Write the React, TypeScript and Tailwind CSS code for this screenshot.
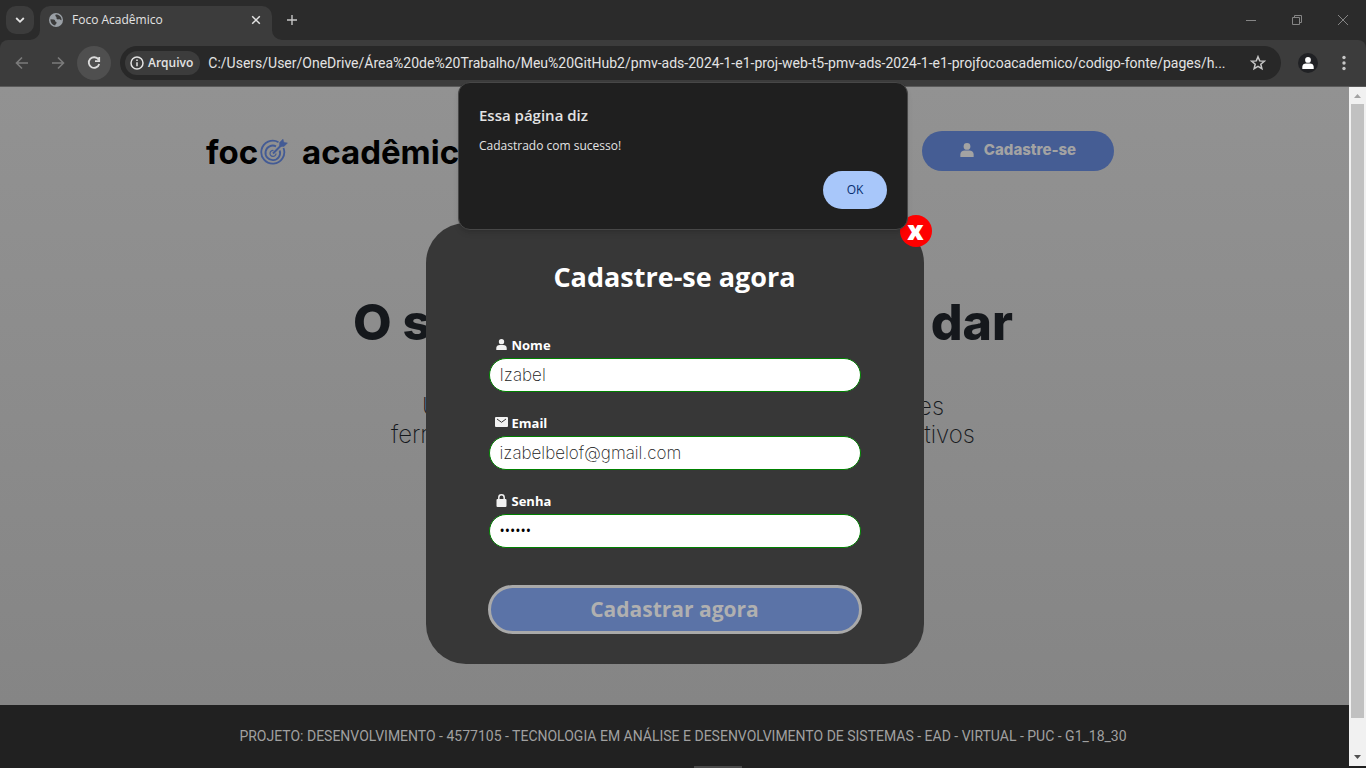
import type { ReactNode } from "react";

const TAB_ICON = "h-4 w-4";

function Globe() {
  return (
    <svg viewBox="0 0 24 24" className="h-[14px] w-[14px] shrink-0" aria-hidden="true">
      <circle cx="12" cy="12" r="12" fill="#9aa0a6" />
      <path
        d="M2.500 10.500 8 11c2 .2 2.500 1 2.500 2.500 0 1.300 2.500 1 2.500 3 0 1.800-2 2-2.500 5A10 10 0 0 1 2.500 10.500zM11.500 2.500c-1.500 2 0 3 1 4.500 1 1.400-.5 3 1.500 3.800 2.200.8 3.500-1 5 .4 1 .9 1.500 1.300 2.500 1.300C22 7 17.500 2.300 11.500 2.500z"
        fill="#3c3c3c"
      />
    </svg>
  );
}

function Target() {
  return (
    <svg viewBox="0 0 28 28" className="ml-[2px] h-7 w-7" fill="none" stroke="#435b95" aria-hidden="true">
      <path d="M18.500 4.200A11.500 11.500 0 1 0 23.500 10" strokeWidth="1.800" />
      <path d="M16 8.300A7.300 7.300 0 1 0 19.700 12.500" strokeWidth="1.900" />
      <path d="M13.500 12.500a3 3 0 1 0 2.500 3" strokeWidth="1.200" />
      <path d="M13 15.500 22.500 6" strokeWidth="2" />
      <path d="M19.500 7.800V4.500L23 1l.8 3.300 3.700.6L24 8.500h-3z" fill="#435b95" strokeWidth=".4" />
    </svg>
  );
}

function Person({ className }: { className: string }) {
  return (
    <svg viewBox="0 0 12 12" className={className} fill="currentColor" aria-hidden="true">
      <circle cx="6" cy="2.900" r="2.900" />
      <path d="M.3 12V9.800C.3 7.700 2 6.500 4 6.500h4c2 0 3.700 1.200 3.700 3.300V12z" />
    </svg>
  );
}

function Mail() {
  return (
    <svg viewBox="0 0 13 10" className="h-[10px] w-[13px]" aria-hidden="true">
      <rect width="13" height="10" rx="1" fill="#f2f2f2" />
      <path d="m2 2 4.500 3.300L11 2" fill="none" stroke="#373737" strokeWidth="1" />
    </svg>
  );
}

function Lock() {
  return (
    <svg viewBox="0 0 11 13" className="h-[13px] w-[11px]" aria-hidden="true">
      <rect x=".5" y="5" width="10" height="8" rx="1" fill="#f2f2f2" />
      <path d="M2.800 6V3.500a2.700 2.700 0 0 1 5.400 0V6" fill="none" stroke="#f2f2f2" strokeWidth="1.500" />
    </svg>
  );
}

function Flare({ className }: { className: string }) {
  return (
    <svg viewBox="0 0 10 10" className={className} aria-hidden="true">
      <path d="M10 0v10H0A10 10 0 0 0 10 0z" fill="#3c3c3c" />
    </svg>
  );
}

function TabStrip() {
  return (
    <div className="flex h-10 items-start bg-[#2b2b2b] pl-[6px] text-[#e3e3e3]">
      <button aria-label="Pesquisar guias" className="mt-[6px] grid h-7 w-7 place-items-center rounded-[10px] bg-[#3c3c3c]">
        <svg viewBox="0 0 10 10" className="h-[10px] w-[10px]" fill="none" stroke="currentColor" strokeWidth="1.800" aria-hidden="true">
          <path d="m1.200 3 3.800 3.800L8.800 3" />
        </svg>
      </button>
      <div className="relative ml-[6px] mt-[6px] flex h-[34px] w-[232px] items-center rounded-t-[10px] bg-[#3c3c3c] pb-[6px] pl-[9px] pr-[11px]">
        <Flare className="absolute -left-[10px] bottom-0 h-[10px] w-[10px]" />
        <Flare className="absolute -right-[10px] bottom-0 h-[10px] w-[10px] -scale-x-100" />
        <Globe />
        <span className="ml-[9px] flex-1 text-[12px]">Foco Acadêmico</span>
        <button aria-label="Fechar guia">
          <svg viewBox="0 0 10 10" className="h-[10px] w-[10px]" stroke="currentColor" strokeWidth="1.500" aria-hidden="true">
            <path d="m1.200 1.200 7.600 7.600M8.800 1.200 1.200 8.800" />
          </svg>
        </button>
      </div>
      <button aria-label="Nova guia" className="ml-3 mt-3 grid h-4 w-4 place-items-center text-[#c7c7c7]">
        <svg viewBox="0 0 10 10" className="h-[10px] w-[10px]" stroke="currentColor" strokeWidth="1.400" aria-hidden="true">
          <path d="M5 0v10M0 5h10" />
        </svg>
      </button>
      <div className="ml-auto flex h-10 items-center text-[#858585]">
        <button aria-label="Minimizar" className="grid h-10 w-[46px] place-items-center">
          <svg viewBox="0 0 10 10" className="h-[10px] w-[10px]" stroke="currentColor" aria-hidden="true">
            <path d="M0 5.500h10" />
          </svg>
        </button>
        <button aria-label="Restaurar" className="grid h-10 w-[46px] place-items-center">
          <svg viewBox="0 0 10 10" className="h-[10px] w-[10px]" fill="none" stroke="currentColor" aria-hidden="true">
            <path d="M.5 2.500h7v7h-7zM2.500 2.500v-2h7v7h-2" />
          </svg>
        </button>
        <button aria-label="Fechar" className="grid h-10 w-[46px] place-items-center">
          <svg viewBox="0 0 10 10" className="h-[10px] w-[10px]" stroke="currentColor" aria-hidden="true">
            <path d="m0 0 10 10M10 0 0 10" />
          </svg>
        </button>
      </div>
    </div>
  );
}

function Toolbar() {
  return (
    <div className="bg-[#2b2b2b]">
      <div className="flex h-[47px] items-center rounded-t-[8px] border-b border-[#5a5a5a] bg-[#3c3c3c] pl-[14px] pr-[14px] text-[#c7c7c7]">
        <button aria-label="Voltar" className="text-[#7b7b7b]">
          <svg viewBox="0 0 16 16" className={TAB_ICON} fill="none" stroke="currentColor" strokeWidth="1.600" aria-hidden="true">
            <path d="M14 8H3M8 2.500 2.500 8 8 13.500" />
          </svg>
        </button>
        <button aria-label="Avançar" className="ml-5 text-[#7b7b7b]">
          <svg viewBox="0 0 16 16" className={TAB_ICON} fill="none" stroke="currentColor" strokeWidth="1.600" aria-hidden="true">
            <path d="M2 8h11M8 2.500 13.500 8 8 13.500" />
          </svg>
        </button>
        <button aria-label="Recarregar" className="ml-[11px] grid h-[34px] w-[34px] place-items-center rounded-full bg-[#4f4f4f] text-[#dcdcdc]">
          <svg viewBox="0 0 16 16" className={TAB_ICON} fill="none" stroke="currentColor" strokeWidth="1.800" aria-hidden="true">
            <path d="M12.500 4.600A5.300 5.300 0 1 0 13.200 9M13.200 2v4.200H9" />
          </svg>
        </button>
        <div className="ml-[9px] flex h-[34px] min-w-0 flex-1 items-center rounded-full bg-[#282828] pl-[5px] pr-[15px]">
          <button className="flex h-6 shrink-0 items-center gap-1 rounded-full bg-[#3c3c3c] pl-[5px] pr-[7px] text-[12px] font-semibold text-[#e3e3e3]">
            <svg viewBox="0 0 14 14" className="h-[14px] w-[14px]" fill="none" stroke="currentColor" strokeWidth="1.500" aria-hidden="true">
              <circle cx="7" cy="7" r="6" />
              <path d="M7 6.300v4M7 3.500v1.500" />
            </svg>
            Arquivo
          </button>
          <input
            aria-label="Endereço"
            readOnly
            defaultValue="C:/Users/User/OneDrive/Área%20de%20Trabalho/Meu%20GitHub2/pmv-ads-2024-1-e1-proj-web-t5-pmv-ads-2024-1-e1-projfocoacademico/codigo-fonte/pages/h..."
            className="ml-2 min-w-0 flex-1 bg-transparent font-['Roboto',sans-serif] text-[14px] text-[#e3e3e3] outline-none"
          />
          <button aria-label="Favoritos" className="ml-1">
            <svg viewBox="0 0 16 16" className={TAB_ICON} fill="none" stroke="currentColor" strokeWidth="1.500" aria-hidden="true">
              <path d="m8 1.700 1.700 4.200 4.600.3-3.500 3 1.100 4.500L8 11.300l-3.900 2.400 1.100-4.500-3.500-3 4.600-.3z" />
            </svg>
          </button>
        </div>
        <button aria-label="Perfil" className="ml-[17px] grid h-5 w-5 place-items-center rounded-full bg-[#202124] text-white">
          <Person className="h-3 w-3" />
        </button>
        <button aria-label="Menu" className="ml-[18px] grid h-4 w-4 place-items-center">
          <svg viewBox="0 0 4 16" className="h-4 w-1" fill="currentColor" aria-hidden="true">
            <circle cx="2" cy="2.500" r="1.700" />
            <circle cx="2" cy="8" r="1.700" />
            <circle cx="2" cy="13.500" r="1.700" />
          </svg>
        </button>
      </div>
    </div>
  );
}

function Field({ id, label, icon, type, value, look }: { id: string; label: string; icon: ReactNode; type: string; value: string; look: string }) {
  return (
    <div>
      <label htmlFor={id} className="flex h-[27px] items-center pt-[2px] text-[13px] font-bold text-white">
        <span className="ml-[6px] mr-1 flex w-[13px] justify-center pb-[3px] text-[#f2f2f2]">{icon}</span>
        {label}
      </label>
      <input
        id={id}
        type={type}
        defaultValue={value}
        className={`block h-[34px] w-full rounded-full border border-[#008000] bg-white px-[10px] outline-none ${look}`}
      />
    </div>
  );
}

function SignupModal() {
  const inputText = "font-['Inter'] text-[17px] font-extralight text-[#222222]";
  return (
    <section className="relative h-[441px] w-[498px] rounded-[40px] bg-[#373737] px-[62px] pt-9">
      <button aria-label="Fechar cadastro" className="absolute -right-2 -top-2 grid h-8 w-8 place-items-center rounded-full bg-[#ff0000] text-[26px] font-extrabold leading-none text-white">
        <span className="pb-[2px]">x</span>
      </button>
      <h2 className="text-center text-[27px] font-bold leading-9 text-white">Cadastre-se agora</h2>
      <form className="pt-9">
        <div className="flex flex-col gap-[17px] px-px">
          <Field id="nome" label="Nome" type="text" value="Izabel" look={inputText} icon={<Person className="h-[11px] w-[11px]" />} />
          <Field id="email" label="Email" type="email" value="izabelbelof@gmail.com" look={inputText} icon={<Mail />} />
          <Field id="senha" label="Senha" type="password" value="123456" look="pb-[2px] text-[14px] text-black" icon={<Lock />} />
        </div>
        <button type="button" className="mt-[37px] h-[49px] w-full rounded-full border-[3px] border-[#a9a9a9] bg-[#5b73a7] text-[21px] font-bold leading-none text-[#b0b0b0]">
          Cadastrar agora
        </button>
      </form>
    </section>
  );
}

function AlertDialog() {
  return (
    <div
      role="alertdialog"
      aria-labelledby="alert-title"
      className="absolute -top-[5px] left-1/2 flex h-[148px] w-[450px] -translate-x-1/2 flex-col rounded-[12px] border border-[#474747] bg-[#1f1f1f] px-5 pb-5 pt-5 text-[#e3e3e3] shadow-md"
    >
      <h3 id="alert-title" className="text-[15px] font-semibold leading-6">Essa página diz</h3>
      <p className="mt-2 text-[12px] leading-[22px]">Cadastrado com sucesso!</p>
      <button className="mt-auto h-[38px] w-16 self-end rounded-full bg-[#a8c7fa] text-[12px] text-[#062e6f]">OK</button>
    </div>
  );
}

function Scrollbar() {
  return (
    <div className="relative mb-[2px] flex w-[17px] shrink-0 flex-col items-center bg-[#f1f1f1] pb-12 pt-[17px]">
      <svg viewBox="0 0 7 4" className="absolute top-[7px] h-1 w-[7px]" fill="#a3a3a3" aria-hidden="true">
        <path d="M0 4h7L3.500 0z" />
      </svg>
      <div className="w-[13px] flex-1 bg-[#c1c1c1]" />
      <svg viewBox="0 0 7 4" className="absolute bottom-[7px] h-1 w-[7px]" fill="#505050" aria-hidden="true">
        <path d="M0 0h7L3.500 4z" />
      </svg>
    </div>
  );
}

export default function App() {
  return (
    <div className="flex min-h-screen flex-col overflow-hidden bg-[#1f1f1f] font-['Open_Sans','Noto_Sans',sans-serif]">
      <TabStrip />
      <Toolbar />
      <div className="relative flex flex-1">
        <div className="relative flex min-w-0 flex-1 flex-col">
          <main className="flex-1 bg-linear-to-b from-[#929292] to-[#858585] font-['Inter',sans-serif]">
            <header className="flex items-start justify-between pl-[206px] pr-[235px] pt-11">
              <div className="flex items-center pt-px text-[33px] font-bold leading-10 text-black">
                foc
                <Target />
                <span className="ml-[14px]">acadêmico</span>
              </div>
              <button className="flex h-10 w-48 items-center justify-center gap-[10px] rounded-full bg-[#455d94] pb-[2px] text-[15px] font-extrabold text-[#a3a3a3]">
                <Person className="h-[14px] w-[14px]" />
                Cadastre-se
              </button>
            </header>
            <div className="pl-[17px]">
              <h1 className="mx-auto flex w-[660px] justify-between pt-[120px] text-[50px] font-extrabold leading-[60px] text-[#15181c]">
                <span>O s</span>
                <span>dar</span>
              </h1>
              <div className="mt-[41px] text-[24px] font-extralight leading-7 text-[#15181c]">
                <p className="mx-auto flex w-[522px] justify-between">
                  <span>U</span>
                  <span>es</span>
                </p>
                <p className="mx-auto flex w-[584px] justify-between">
                  <span>ferr</span>
                  <span>tivos</span>
                </p>
              </div>
            </div>
          </main>
          <footer className="flex h-[63px] flex-col items-center justify-between bg-[#212121] pl-[17px] pt-5">
            <p className="font-['Roboto',sans-serif] text-[14px] leading-[22px] text-[#a0a0a0]">
              PROJETO: DESENVOLVIMENTO - 4577105 - TECNOLOGIA EM ANÁLISE E DESENVOLVIMENTO DE SISTEMAS - EAD - VIRTUAL - PUC - G1_18_30
            </p>
            <div className="mr-[-70px] h-[2px] w-12 bg-[#4a4a4a]" />
          </footer>
          <div className="absolute inset-x-0 top-[136px] flex justify-center">
            <SignupModal />
          </div>
        </div>
        <Scrollbar />
        <AlertDialog />
      </div>
    </div>
  );
}
